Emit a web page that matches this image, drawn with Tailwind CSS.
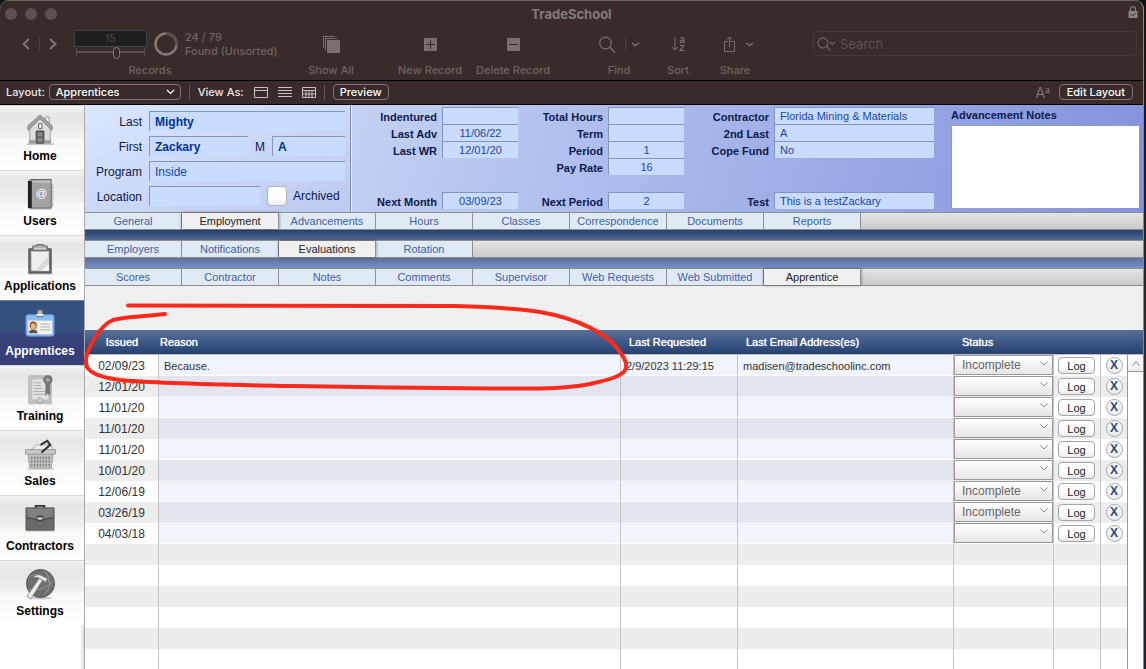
<!DOCTYPE html>
<html lang="en">
<head>
<meta charset="utf-8">
<title>TradeSchool</title>
<script src="https://cdn.jsdelivr.net/npm/@tailwindcss/browser@4"></script>
</head>
<body class="bg-[#111214]">
<div class="relative flex h-screen overflow-hidden font-['Liberation_Sans',Arial,sans-serif] text-[11px] leading-[14px]">
<div class="flex min-w-0 flex-1 flex-col overflow-hidden rounded-t-[9px] border-r border-[#8b8785] bg-white">

  <!-- Title bar and toolbar -->
  <header class="shrink-0 border-t border-b border-t-[#6d6462] border-b-black bg-[#382b29] pb-px font-['Inter',sans-serif] text-[#6f6463]">
    <div class="relative flex h-[26px] items-center px-[5px]">
      <span class="flex gap-2">
        <i class="size-3 rounded-full bg-[#5d504e]"></i><i class="size-3 rounded-full bg-[#5d504e]"></i><i class="size-3 rounded-full bg-[#5d504e]"></i>
      </span>
      <h1 class="absolute inset-x-0 text-center text-[13px] font-bold text-[#867b79]">TradeSchool</h1>
      <svg class="mb-1 ml-auto" width="10" height="14" viewBox="0 0 10 14"><path d="M2.500 6V4a2.500 2.500 0 0 1 5 0v2" fill="none" stroke="#8a8180" stroke-width="1.200"/><rect x=".5" y="6" width="9" height="7" fill="#8a8180"/><path d="m3 9.500 1.500 1.500L7.500 8" fill="none" stroke="#382b29"/></svg>
    </div>
    <div class="flex pl-[22px] pr-[6px] text-[11px] font-medium">
      <div class="flex w-[256px] flex-col">
        <div class="flex h-[34px] items-center">
          <button class="shrink-0" aria-label="Previous record"><svg width="8" height="12" viewBox="0 0 8 12" fill="none" stroke="#85797a" stroke-width="1.800"><path d="M7 1 1.500 6 7 11"/></svg></button>
          <i class="mx-[9px] h-3.5 w-px shrink-0 bg-[#4c3f3d]"></i>
          <button class="shrink-0" aria-label="Next record"><svg width="8" height="12" viewBox="0 0 8 12" fill="none" stroke="#85797a" stroke-width="1.800"><path d="m1 1 5.500 5L1 11"/></svg></button>
          <div class="ml-[17px] w-[73px] shrink-0">
            <input aria-label="Record number" value="15" class="block h-[17px] w-full border border-[#3d4646] bg-[#1e1e1e] text-center text-[10px] text-[#4b4443]">
            <svg width="73" height="12" viewBox="0 0 73 12" fill="none" stroke="#5d504e"><path d="M2.500 1.500v7M70.500 1.500v7" /><path d="M2.500 5H39m7 0h24.500" stroke-width="2"/><rect x="39.500" y=".5" width="6" height="11" rx="3" stroke="#85797a"/></svg>
          </div>
          <svg class="ml-[7px] shrink-0" width="24" height="24" viewBox="0 0 24 24" fill="none" stroke-width="2.500"><circle cx="12" cy="12" r="10.500" stroke="#857a79"/><path d="M12 1.500A10.500 10.500 0 0 1 22 14" stroke="#5a4e4c"/></svg>
          <p class="ml-[7px] whitespace-nowrap text-[11px] leading-[14px]">24 / 79<br>Found (Unsorted)</p>
        </div>
        <span class="text-center leading-[18px]">Records</span>
      </div>
      <button class="ml-[23px] flex w-[60px] flex-col items-center"><span class="flex h-[34px] items-center"><svg width="17" height="17" viewBox="0 0 17 17"><path d="M.5 12V.5H12M2.500 14V2.500H14" fill="none" stroke="#7b706e"/><path d="M4 4h13v13H4z" fill="#7b706e"/></svg></span><span class="leading-[18px]">Show All</span></button>
      <button class="ml-[29px] flex w-[80px] flex-col items-center"><span class="flex h-[34px] items-center"><svg width="13" height="13" viewBox="0 0 13 13"><path d="M0 0h13v13H0z" fill="#7b706e"/><path d="M6.500 2v9M2 6.500h9" stroke="#382b29"/></svg></span><span class="leading-[18px]">New Record</span></button>
      <button class="ml-[3px] flex w-[80px] flex-col items-center"><span class="flex h-[34px] items-center"><svg width="13" height="13" viewBox="0 0 13 13"><path d="M0 0h13v13H0z" fill="#7b706e"/><path d="M2 6.500h9" stroke="#382b29"/></svg></span><span class="leading-[18px]">Delete Record</span></button>
      <button class="ml-9 flex w-[60px] flex-col items-center"><span class="flex h-[34px] items-center"><svg width="42" height="18" viewBox="0 0 42 18" fill="none" stroke="#7b706e"><circle cx="7.500" cy="8" r="5.800" stroke-width="1.200"/><path d="m11.500 12 5.500 5.500" stroke-width="1.500"/><path d="M27.500 2v14" stroke="#4c3f3d"/><path d="m34 8 3.500 2.500L41 8" stroke-width="1.500"/></svg></span><span class="leading-[18px]">Find</span></button>
      <button class="ml-[9px] flex w-10 flex-col items-center"><span class="flex h-[34px] items-center"><svg width="15" height="16" viewBox="0 0 15 16" fill="none" stroke="#7b706e"><path d="M4 1v13M1 11l3 3 3-3"/><path d="M9.500 2.500C10.500 1 13 1.200 13 3v4M13 4.200c-2-.2-3.800 0-3.800 1.400s2.800 1.400 3.800-.2M9 9.500h4L9 14.500h4.500" stroke-width="1.200"/></svg></span><span class="leading-[18px]">Sort</span></button>
      <button class="ml-3 flex w-[50px] flex-col items-center"><span class="flex h-[34px] items-center pl-2"><svg width="30" height="16" viewBox="0 0 30 16" fill="none" stroke="#7b706e"><path d="M4 5.500H.5v10h10v-10H7M5.500 11V1M3 3.500 5.500 1 8 3.500"/><path d="m22 7 3.500 2.500L29 7" stroke-width="1.500"/></svg></span><span class="leading-[18px]">Share</span></button>
      <label class="mt-1 ml-[53px] flex h-[25px] min-w-0 flex-1 items-center gap-1 rounded-[5px] border border-[#463a38] px-[3px]">
        <svg width="19" height="14" viewBox="0 0 19 14" fill="none" stroke="#695e5c" stroke-width="1.400"><circle cx="6" cy="6" r="5"/><path d="m9.500 9.500 4 4M13 5l2.500 2.500L18 5"/></svg>
        <input type="search" placeholder="Search" class="min-w-0 flex-1 bg-transparent text-[13px] font-normal placeholder:text-[#5d504e]">
      </label>
    </div>
  </header>

  <!-- Layout bar -->
  <div class="flex h-6 shrink-0 items-center border-b border-black bg-[#382b29] pr-[10px] pb-px pl-[6px] font-['Inter',sans-serif] text-[11px] font-medium text-[#ece6e5]">
    <label for="layout">Layout:</label>
    <span class="relative ml-[4px] block w-[132px]">
      <select id="layout" class="block h-4 w-full appearance-none rounded-[4px] border border-[#81726f] bg-transparent px-1.5 text-[11px] leading-[14px] text-white"><option>Apprentices</option></select>
      <svg class="pointer-events-none absolute top-[5px] right-[6px]" width="9" height="6" viewBox="0 0 9 6" fill="none" stroke="#fff" stroke-width="1.200"><path d="m1 1 3.500 3.500L8 1"/></svg>
    </span>
    <i class="mx-[8px] h-[15px] w-px bg-[#645755]"></i>
    <span class="mr-[10px]">View As:</span>
    <span class="flex gap-[10px]">
      <button aria-label="Form view"><svg width="14" height="11" viewBox="0 0 14 11" fill="none" stroke="#c9c0be"><path d="M.5.5h13v10H.5zM.5 3.500h13"/></svg></button>
      <button aria-label="List view"><svg width="14" height="11" viewBox="0 0 14 11" stroke="#c9c0be"><path d="M0 .5h14M0 3.500h14M0 6.500h14M0 9.500h14"/></svg></button>
      <button aria-label="Table view"><svg width="14" height="11" viewBox="0 0 14 11" fill="none" stroke="#c9c0be"><path d="M.5.5h13v10H.5zM.5 3.500h13M.5 7h13M4 3.500v7M7 3.500v7M10 3.500v7"/></svg></button>
    </span>
    <i class="mx-[8px] h-[15px] w-px bg-[#645755]"></i>
    <button class="h-4 rounded-[4px] border border-[#81726f] px-1.5 leading-[14px] text-white">Preview</button>
    <span class="mr-[9px] ml-auto flex items-start font-['Liberation_Serif',serif] text-[10px] leading-[9px] text-[#8b807e]"><span class="font-['Inter',sans-serif] text-[15px] leading-[15px] font-light">A</span>a</span>
    <button class="h-4 rounded-[4px] border border-[#81726f] px-[7px] leading-[14px] text-white">Edit Layout</button>
  </div>

  <div class="flex min-h-0 flex-1">
    <!-- Module navigation -->
    <nav id="nav" class="flex w-[85px] shrink-0 flex-col border-r border-[#a9a9a9] bg-linear-to-l from-[#dcdcdc] to-white to-[4px] text-center text-[12px] font-bold text-black"></nav>

    <main class="flex min-w-0 flex-1 flex-col bg-[#f0f0f0]">
      <!-- Record summary -->
      <section class="flex h-[107px] shrink-0 text-[#0a1a4c]">
        <div class="flex w-[266px] shrink-0 flex-col gap-[5px] border-r border-[#8190b0] bg-linear-to-br from-[#dbe7ff] to-[#bccaf0] pt-[6px] pr-[5px] text-[12px]">
          <div class="flex h-5 items-center"><label for="last" class="w-[57px] pt-px text-right">Last</label><input id="last" value="Mighty" class="ml-[7px] h-5 min-w-0 flex-1 border-t border-l border-[#8395bb] bg-[#c9dbff] px-[5px] font-bold text-[#003399]"></div>
          <div class="flex h-5 items-center"><label for="first" class="w-[57px] pt-px text-right">First</label><input id="first" value="Zackary" class="ml-[7px] h-5 w-[99px] border-t border-l border-[#8395bb] bg-[#c9dbff] px-[5px] font-bold text-[#003399]"><label for="mid" class="w-6 pt-px text-center">M</label><input id="mid" value="A" class="h-5 min-w-0 flex-1 border-t border-l border-[#8395bb] bg-[#c9dbff] px-[5px] font-bold text-[#003399]"></div>
          <div class="flex h-5 items-center"><label for="program" class="w-[57px] pt-px text-right">Program</label><input id="program" value="Inside" class="ml-[7px] h-5 min-w-0 flex-1 border-t border-l border-[#8395bb] bg-[#c9dbff] px-[5px] text-[#1c47a5]"></div>
          <div class="flex h-5 items-center"><label for="location" class="w-[57px] pt-px text-right">Location</label><input id="location" class="ml-[7px] h-5 w-[111px] border-t border-l border-[#8395bb] bg-[#c9dbff] px-[5px]"><input id="archived" type="checkbox" class="ml-[7px] size-5 appearance-none rounded-[4px] border border-[#b3b3b3] bg-linear-to-b from-white from-60% to-[#ececec]"><label for="archived" class="ml-[6px]">Archived</label></div>
        </div>
        <div class="flex min-w-0 flex-1 border-l border-[#e4ecff] bg-linear-105 from-[#c4d1f4] to-[#8392dc] pt-[2px] pr-[4px] text-[11px]">
          <div id="g1" class="grid w-[166px] shrink-0 auto-rows-[17px] grid-cols-[1fr_76px] items-center gap-x-[5px]"></div>
          <div id="g2" class="grid w-[166px] shrink-0 auto-rows-[17px] grid-cols-[1fr_76px] items-center gap-x-[5px]"></div>
          <div id="g3" class="grid w-[250px] shrink-0 auto-rows-[17px] grid-cols-[85px_160px] items-center gap-x-[5px]"></div>
          <div class="ml-[17px] flex min-w-0 flex-1 flex-col pt-px">
            <label for="notes" class="h-[17px] font-bold">Advancement Notes</label>
            <textarea id="notes" class="h-[83px] w-full resize-none border-t border-l border-[#8f99b8] bg-white"></textarea>
          </div>
        </div>
      </section>

      <div id="tabs1" role="tablist" class="flex h-[18px] shrink-0 border-y border-[#8f8f8f] bg-linear-to-b from-[#e4e4e4] to-[#cacaca]"></div>
      <div class="h-[10px] shrink-0 bg-linear-to-b from-[#274272] to-[#51698f]"></div>
      <div id="tabs2" role="tablist" class="flex h-[18px] shrink-0 border-y border-[#8f8f8f] bg-linear-to-b from-[#e4e4e4] to-[#cacaca]"></div>
      <div class="h-[10px] shrink-0 bg-linear-to-b from-[#5b7199] to-[#7590cc]"></div>
      <div id="tabs3" role="tablist" class="flex h-[18px] shrink-0 border-y border-[#8f8f8f] bg-linear-to-b from-[#e4e4e4] to-[#cacaca]"></div>

      <!-- Requests list -->
      <div class="mt-[44px] flex min-h-0 flex-1 overflow-hidden bg-white">
        <table class="w-0 flex-1 table-fixed border-separate border-spacing-0 self-start text-[#333]">
          <colgroup><col class="w-[74px]"><col><col class="w-[117px]"><col class="w-[216px]"><col class="w-[100px]"><col class="w-[47px]"><col class="w-[26px]"></colgroup>
          <thead>
            <tr class="h-[25px] bg-linear-to-b from-[#58709a] to-[#24406f] text-left text-white text-shadow-[0_0_1px_#ffffff]">
              <th class="border-b border-[#bbb] p-0 text-center font-normal">Issued</th>
              <th class="border-b border-[#bbb] p-0 pl-px font-normal">Reason</th>
              <th class="border-b border-[#bbb] p-0 pl-2 font-normal">Last Requested</th>
              <th class="border-b border-[#bbb] p-0 pl-2 font-normal">Last Email Address(es)</th>
              <th class="border-b border-[#bbb] p-0 pl-2 font-normal" colspan="3">Status</th>
            </tr>
          </thead>
          <tbody id="rows"></tbody>
        </table>
        <div class="flex w-[16px] shrink-0 flex-col">
          <div class="h-[25px] border-b border-[#bbb] bg-linear-to-b from-[#58709a] to-[#24406f]"></div>
          <div class="flex-1 border-l border-[#999] bg-white">
            <button aria-label="Scroll up" class="flex h-[17px] w-full items-center justify-center border-b border-[#999] bg-linear-to-b from-white to-[#ececec]"><svg width="8" height="5" viewBox="0 0 8 5" fill="none" stroke="#888"><path d="m.5 4.500 3.500-4 3.500 4"/></svg></button>
          </div>
        </div>
      </div>
    </main>
  </div>
</div>
<!-- Desktop edge beside the window -->
<div class="w-[2px] shrink-0 bg-linear-to-b from-[#111214] via-[#2a2b2e] to-[#182334]"></div>

<!-- Hand-drawn markup -->
<svg class="pointer-events-none absolute top-0 left-0" width="1146" height="669" viewBox="0 0 1146 669" fill="none" stroke="#ff2a1c" stroke-width="4" stroke-linecap="round" stroke-linejoin="round"><path d="M128 305.500C250 305 360 305 455 306C500 307 520 309 540 312C580 319 606 334 617 348C624 357 627 362 626 368C624 376 608 380 590 384C575 387 560 388 540 388.500C450 389 350 387 260 385.500C200 384 150 383 120 380C104 378 91 374 87 367C84 359 88 350 94 339C99 331 105 323 113 320C122 317 140 317 165 314"/></svg>
</div>

<script>
const icons = {
Home: `<path d="M2 31h28" stroke="#999"/><path d="M21 3h4v8h-4z" fill="#eee" stroke="#999"/><path d="M5 14 15.500 4 26 14v16H5z" fill="#dedede" stroke="#999"/><path d="M3 17 15.500 5 28 17v-5L15.500 1 3 12z" fill="#a2a2a2" stroke="#777" stroke-width=".8"/><path d="M14 10h3.500v5H14z" fill="#eee" stroke="#666"/><path d="M11.500 17.500h8V30h-8z" fill="#666" stroke="#444"/><path d="M13 19h5v4h-5zM13 25h5v4h-5z" fill="#888"/><path d="M4 27h7v3H4zM20 27h7v3h-7z" fill="#999"/>`,
Users: `<path d="M5 31h22" stroke="#aaa"/><path d="M27 6h2v4h-2zM27 12h2v4h-2zM27 18h2v4h-2zM27 24h2v4h-2z" fill="#ddd" stroke="#999" stroke-width=".6"/><path d="M4 2 6 .5h21V30H4z" fill="#a2a2a2" stroke="#666"/><path d="M3 2h4v28H3z" fill="#222"/><path d="M8 3h18" stroke="#ddd"/><text x="17" y="19" font-size="12" text-anchor="middle" fill="#fff" font-weight="400">@</text>`,
Applications: `<path d="M3 31h26" stroke="#bbb"/><path d="M4 5h23v25H4z" fill="#777" stroke="#444"/><path d="M6.500 7.500h18v20h-18z" fill="#efefef"/><path d="M24.500 12v15.500H10z" fill="#dcdcdc"/><path d="m18 27.500 6.500-6.500v6.500z" fill="#fff"/><path d="M12 2V.500h7V2h4v5H8V2z" fill="#aaa" stroke="#666"/><path d="M10 4.500h11" stroke="#ddd"/>`,
Apprentices: `<rect x="1" y="6" width="29" height="22" rx="2" fill="#8dbdf3" stroke="#5d94d6"/><path d="M3 12h25v14H3z" fill="#f4f4ef"/><path d="M3 12h11v13H3z" fill="#e7e0d5"/><ellipse cx="8.500" cy="17" rx="3.500" ry="4" fill="#8a4b22"/><ellipse cx="8.500" cy="18" rx="2.500" ry="3.200" fill="#e9b583"/><path d="M4 25c0-5 9-5 9 0z" fill="#555"/><path d="M16 15.500h10M16 18.500h10M16 21.500h10" stroke="#aaa"/><path d="M13 1h5v7h-5z" fill="#bbb" stroke="#666"/><path d="M12 5h7v2h-7z" fill="#eee"/>`,
Training: `<path d="M3 31h26" stroke="#ccc"/><path d="M4 2h23v28H4z" fill="#c6c6c6" stroke="#aaa"/><path d="M7 5h17v22H7z" fill="#e2e2e2" stroke="#bbb"/><path d="M9 9h8M9 12h8M9 15h9M9 18h12M9 21h12" stroke="#aaa"/><path d="M21 9h5v14l-2.500-3-2.500 3z" fill="#777"/><circle cx="23.500" cy="6" r="4.500" fill="#777" stroke="#666" stroke-dasharray="1.500 1"/><circle cx="23.500" cy="6" r="2" fill="#aaa"/><circle cx="15.500" cy="27" r="2.500" fill="#ddd" stroke="#999"/>`,
Sales: `<path d="M2 31h28" stroke="#bbb"/><path d="m4 13 8-7h15l2 7z" fill="#ececec" stroke="#aaa"/><path d="M3 15h26l-2 15H5z" fill="#c2c2c2" stroke="#999"/><path d="M.5 11h31v4.500H.5z" fill="#cacaca" stroke="#999"/><path d="M7 18v10M10 18v10M13 18v10M16 18v10M19 18v10M22 18v10M25 18v10" stroke="#808080" stroke-width="1.500"/><path d="M5 21.500h22M5 25h22" stroke="#ccc"/><path d="m17 14 9-8-3-4-7 4" fill="none" stroke="#333" stroke-width="2.200"/>`,
Contractors: `<path d="M1 28h30" stroke="#ccc"/><path d="M11 4V2h9v2" fill="none" stroke="#333" stroke-width="1.800"/><path d="M1 4h29v23H1z" fill="#6a6a6a" stroke="#555"/><path d="M2 5h27l-1 8-12 3-13-3z" fill="#808080"/><path d="m2 14 13 3 14-3" stroke="#444" fill="none"/><path d="M12 12h7v6h-7z" fill="#444"/><path d="M13 14h5v2h-5z" fill="#eee"/>`,
Settings: `<ellipse cx="17" cy="30" rx="11" ry="1.500" fill="#ccc"/><circle cx="16" cy="15" r="14.500" fill="#6e6e6e" stroke="#555"/><path d="M4 9c9-8 20 0 24 9M20 2c8 8 6 19 0 25M4 21c10 2 20-2 25-9" stroke="#999" fill="none"/><path d="m2 28 14-20 3 2L6 31z" fill="#eee" stroke="#888"/><path d="M8 9c2-4 8-4 11-1l4 1-1 5-5-3c-3-2-6-3-9-2z" fill="#e4e4e4" stroke="#777"/>`
};
document.getElementById('nav').innerHTML = Object.keys(icons).map(n => `<a href="#" class="${n === 'Apprentices'
  ? 'flex h-[65px] shrink-0 flex-col items-center border-t border-[#6f7fa8] bg-linear-to-b from-[#35507f] from-50% to-[#38407a] to-50% pt-[8px] pr-[4px] text-white'
  : 'flex h-[65px] shrink-0 flex-col items-center border-t border-[#d9d9d9] bg-linear-[to_bottom,#f3f3f3_0,#e6e6e6_14%,#f1f1f1_50%,#f8f8f8_50%,#ffffff_100%] pt-[8px] pr-[4px]'}"><svg class="shrink-0" width="31" height="31" viewBox="0 0 32 32">${icons[n]}</svg><span class="mt-[4px] leading-[14px]">${n}</span></a>`).join('');

const group = (id, aligned, list) => {
  document.getElementById(id).innerHTML = list.map(([l, v], i) => l === '' ? '<span class="col-span-2"></span>' :
    `<label for="${id}-${i}" class="pt-[3px] text-right font-bold whitespace-nowrap">${l}</label><input id="${id}-${i}" value="${v}" class="${aligned === 'center'
    ? 'h-[17px] w-full border-t border-l border-[#8395bb] bg-[#c9dbff] text-center text-[#1c47a5]'
    : 'h-[17px] w-full border-t border-l border-[#8395bb] bg-[#c9dbff] px-[5px] text-[#1c47a5]'}">`).join('');
};
group('g1', 'center', [['Indentured', ''], ['Last Adv', '11/06/22'], ['Last WR', '12/01/20'], ['', ''], ['', ''], ['Next Month', '03/09/23']]);
group('g2', 'center', [['Total Hours', ''], ['Term', ''], ['Period', '1'], ['Pay Rate', '16'], ['', ''], ['Next Period', '2']]);
group('g3', 'left', [['Contractor', 'Florida Mining &amp; Materials'], ['2nd Last', 'A'], ['Cope Fund', 'No'], ['', ''], ['', ''], ['Test', 'This is a testZackary']]);

const tabs = (id, names, on) => {
  document.getElementById(id).innerHTML = names.map(n => `<button role="tab" aria-selected="${n === on}" class="${n === on
    ? 'relative w-[97px] border-r border-[#8f8f8f] bg-[#f0f0f0] leading-4 text-[#222] shadow-[0_0_3px_rgba(0,0,0,0.5)]'
    : 'w-[97px] border-r border-[#8f8f8f] bg-[#e0eaf5] leading-4 text-[#3f61a4]'}">${n}</button>`).join('');
};
tabs('tabs1', ['General', 'Employment', 'Advancements', 'Hours', 'Classes', 'Correspondence', 'Documents', 'Reports'], 'Employment');
tabs('tabs2', ['Employers', 'Notifications', 'Evaluations', 'Rotation'], 'Evaluations');
tabs('tabs3', ['Scores', 'Contractor', 'Notes', 'Comments', 'Supervisor', 'Web Requests', 'Web Submitted', 'Apprentice'], 'Apprentice');

const data = [
  ['02/09/23', 'Because.', '2/9/2023 11:29:15', 'madisen@tradeschoolinc.com', 'Incomplete'],
  ['12/01/20', '', '', '', ''], ['11/01/20', '', '', '', ''], ['11/01/20', '', '', '', ''], ['11/01/20', '', '', '', ''], ['10/01/20', '', '', '', ''],
  ['12/06/19', '', '', '', 'Incomplete'], ['03/26/19', '', '', '', 'Incomplete'], ['04/03/18', '', '', '', '']];
let html = '';
data.forEach((r, i) => {
  const cell = i % 2 ? 'border-r border-b border-r-[#c4c4c4] border-b-[#ededed] bg-[#e3e6ee] p-0 pt-px pl-[5px]' : 'border-r border-b border-r-[#c4c4c4] border-b-white bg-[#f1f4fd] p-0 pt-px pl-[5px]';
  html += `<tr class="${i % 2 ? 'h-[21px] bg-[#ededed]' : 'h-[21px] bg-white'}">
    <td class="border-r border-[#c4c4c4] p-0 pt-px text-center text-[12px]">${r[0]}</td>
    <td class="${cell}">${r[1]}</td><td class="${cell}">${r[2]}</td><td class="${cell}">${r[3]}</td>
    <td class="border-r border-[#c4c4c4] p-0 pb-px"><span class="relative block"><select aria-label="Status" class="block h-5 w-full appearance-none border border-[#999] bg-linear-to-b from-white to-[#e6e6e6] px-[7px] text-[12px] text-[#666]"><option>${r[4]}</option></select><svg class="pointer-events-none absolute top-[6px] right-[5px]" width="8" height="5" viewBox="0 0 8 5" fill="none" stroke="#888"><path d="m.5.5 3.500 3.500L7.500.5"/></svg></span></td>
    <td class="border-r border-[#c4c4c4] p-0"><button class="ml-1 block h-[17px] w-[37px] rounded-[4px] border border-[#a0a6ae] bg-linear-to-b from-white from-50% to-[#ebeded] leading-[16px] text-[#222]">Log</button></td>
    <td class="p-0"><button aria-label="Delete" class="mx-auto block size-[17px] rounded-full border border-[#a0a6ae] bg-linear-to-b from-white to-[#ebeded] text-[12px] leading-[15px] font-bold text-[#2b4688]">X</button></td></tr>`;
});
for (let i = 0; i < 6; i++) {
  html += `<tr class="${i % 2 ? 'h-[21px] bg-white' : 'h-[21px] bg-[#ededed]'}">${'<td class="border-r border-[#c4c4c4] p-0"></td>'.repeat(6)}<td class="p-0"></td></tr>`;
}
document.getElementById('rows').innerHTML = html;
</script>
</body>
</html>
